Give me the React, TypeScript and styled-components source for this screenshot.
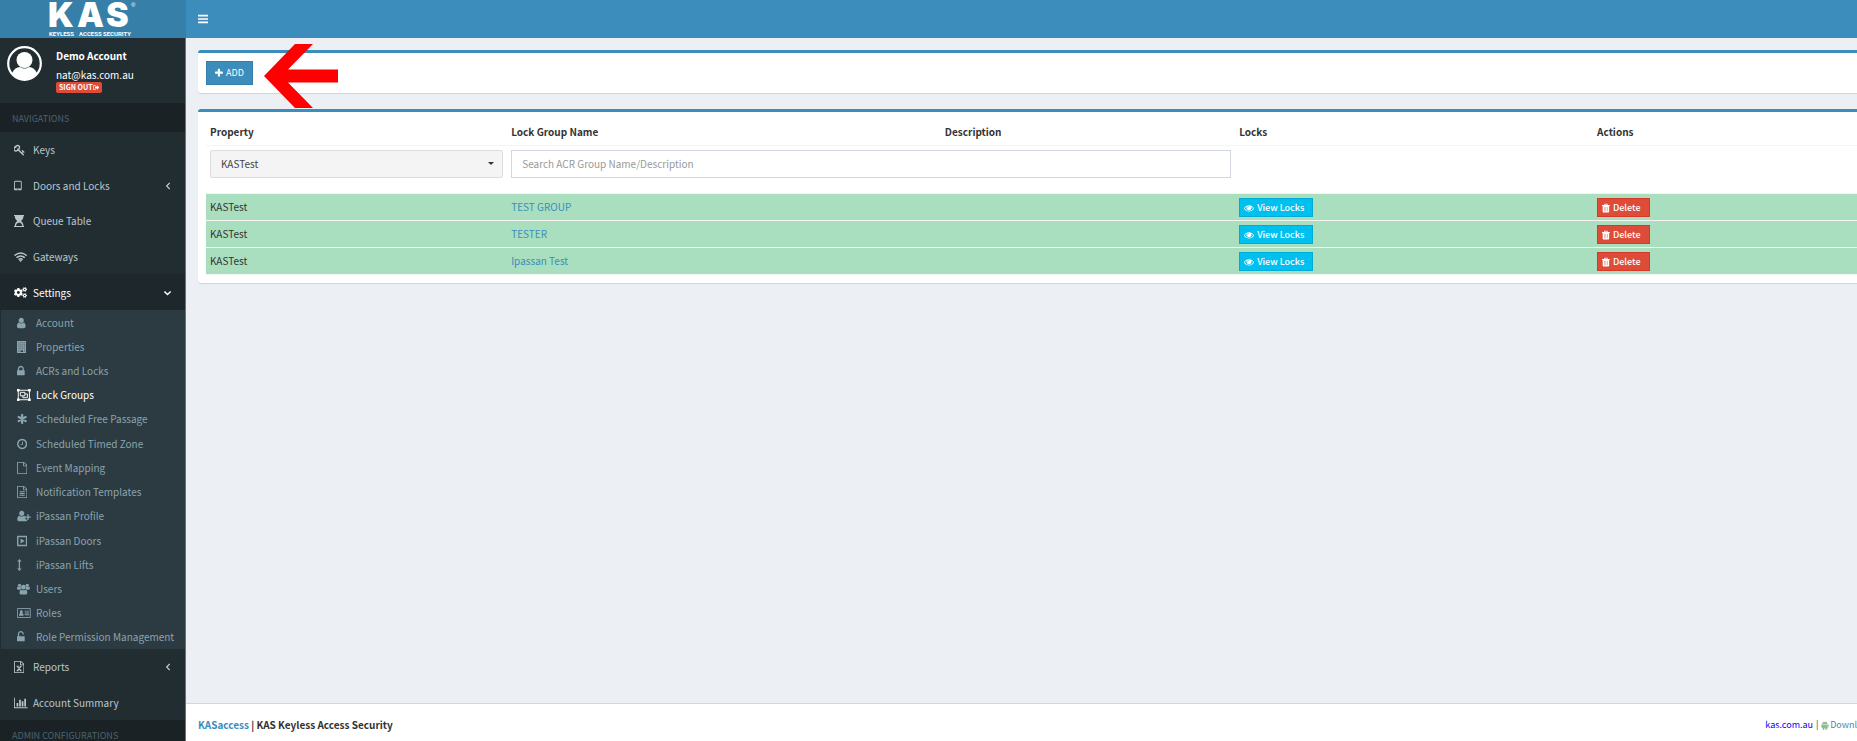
import React from "react";
import styled, { createGlobalStyle, css } from "styled-components";
import { FaCogs } from "react-icons/fa";

const GlobalStyle = createGlobalStyle`
  *, *::before, *::after { box-sizing: border-box; }
  body {
    margin: 0;
    background: #ecf0f5;
    color: #333;
    font: 400 10px/14px "Noto Sans CJK JP", "Open Sans", sans-serif;
  }
  button, input, select { font: inherit; }
  ul { list-style: none; margin: 0; padding: 0; }
  a { color: #3c8dbc; text-decoration: none; }
`;

/* ---------- icons ---------- */

const FILE =
  "M1596 380q28 28 48 76t20 88v1152q0 40-28 68t-68 28h-1344q-40 0-68-28t-28-68v-1600q0-40 28-68t68-28h896q40 0 88 20t76 48zm-444-244v376h376q-10-29-22-41l-313-313q-12-12-41-22zm384 1528v-1024h-416q-40 0-68-28t-28-68v-416h-768v1536h1280z";

/* Each entry: left edge and width of the viewBox on a 1792-high grid, then the drawing. */
const glyphs: Record<string, [number, number, React.ReactNode]> = {
  bars: [128, 1536, <path d="M1664 1344v128q0 26-19 45t-45 19h-1408q-26 0-45-19t-19-45v-128q0-26 19-45t45-19h1408q26 0 45 19t19 45zm0-512v128q0 26-19 45t-45 19h-1408q-26 0-45-19t-19-45v-128q0-26 19-45t45-19h1408q26 0 45 19t19 45zm0-512v128q0 26-19 45t-45 19h-1408q-26 0-45-19t-19-45v-128q0-26 19-45t45-19h1408q26 0 45 19t19 45z" />],
  key: [100, 1664, <path d="M832 512q0-80-56-136t-136-56-136 56-56 136q0 42 19 83-41-19-83-19-80 0-136 56t-56 136 56 136 136 56 136-56 56-136q0-42-19-83 41 19 83 19 80 0 136-56t56-136zm851 704q0 17-49 66t-66 49q-9 0-28.5-16t-36.5-33-38.5-40-24.5-26l-96 96 220 220q28 28 28 68 0 42-39 81t-81 39q-40 0-68-28l-671-671q-176 131-365 131-163 0-265.5-102.5t-102.5-265.5q0-160 95-313t248-248 313-95q163 0 265.5 102.5t102.5 265.5q0 189-131 365l355 355 96-96q-3-3-26-24.5t-40-38.5-33-36.5-16-28.5q0-17 49-66t66-49q13 0 23 10 6 6 46 44.5t82 79.5 86.5 86 73 78 28.5 41z" />],
  tablet: [320, 1152, <path d="M960 1408q0-26-19-45t-45-19-45 19-19 45 19 45 45 19 45-19 19-45zm384-160v-960q0-13-9.500-22.500t-22.500-9.500h-832q-13 0-22.500 9.500t-9.500 22.500v960q0 13 9.500 22.500t22.500 9.500h832q13 0 22.500-9.500t9.500-22.500zm128-960v1088q0 66-47 113t-113 47h-832q-66 0-113-47t-47-113v-1088q0-66 47-113t113-47h832q66 0 113 47t47 113z" />],
  hourglass: [128, 1536, <path fillRule="evenodd" d="M128 0h1536v150h-112c0 350-160 560-380 746 220 186 380 396 380 746h112v150h-1536v-150h112c0-350 160-560 380-746-220-186-380-396-380-746h-112zM440 1642h912c0-150-40-270-130-390l-326-150-326 150c-90 120-130 240-130 390z" />],
  wifi: [0, 1984, <g fill="none" stroke="currentColor" strokeWidth="215"><path d="M80 690q912-780 1824 0M370 990q622-520 1244 0M670 1270q322-260 644 0" /><path fill="currentColor" stroke="none" d="M992 1640l-230-240q230-170 460 0z" /></g>],
  user: [256, 1280, <path d="M1536 1399q0 109-62.5 187t-150.5 78h-854q-88 0-150.5-78t-62.5-187q0-85 8.500-160.500t31.500-152 58.500-131 94-89 134.500-34.500q131 128 313 128t313-128q76 0 134.500 34.500t94 89 58.500 131 31.500 152 8.500 160.500zm-256-887q0 159-112.500 271.500t-271.500 112.500-271.500-112.500-112.500-271.500 112.500-271.500 271.500-112.500 271.500 112.500 112.500 271.500z" />],
  userPlus: [0, 2048, <g><path d="M704 896q-159 0-271-112t-112-272 112-272 271-112 272 112 112 272-112 272-272 112z" /><path d="M1280 1140v290h240v180q-80 54-180 54h-1050q-110 0-180-70t-70-190q0-240 90-400t240-160q140 128 334 128t334-128q100 0 160 100h60q0 196-78 196z" /><path d="M1536 640h200v330h312v200h-312v330h-200v-330h-312v-200h312z" /></g>],
  users: [0, 1920, <g><circle cx="384" cy="350" r="240" /><circle cx="1536" cy="350" r="240" /><path d="M560 640q-20 150 80 290-140 0-220 94h-230q-190 0-190-190 0-310 130-310 110 90 254 90 90 0 176-36zM1360 640q20 150-80 290 140 0 220 94h230q190 0 190-190 0-310-130-310-110 90-254 90-90 0-176-36z" /><circle cx="960" cy="620" r="350" /><path d="M660 1000q130 96 300 96t300-96q276 0 276 480 0 240-230 240h-692q-230 0-230-240 0-480 276-480z" /></g>],
  asterisk: [128, 1536, <path fill="none" stroke="currentColor" strokeWidth="340" strokeLinecap="round" d="M896 300v1192M380 598l1032 596M1412 598l-1032 596" />],
  building: [190, 1408, <path fillRule="evenodd" d="M190 0h1408v1792h-1408zM400 220v130h150v-130zM690 220v130h150v-130zM980 220v130h150v-130zM1270 220v130h130v-130zM400 520v130h150v-130zM690 520v130h150v-130zM980 520v130h150v-130zM1270 520v130h130v-130zM400 820v130h150v-130zM690 820v130h150v-130zM980 820v130h150v-130zM1270 820v130h130v-130zM400 1120v130h150v-130zM690 1120v130h150v-130zM980 1120v130h150v-130zM1270 1120v130h130v-130zM400 1420v130h150v-130zM720 1420v230h380v-230zM1270 1420v130h130v-130z" />],
  lock: [320, 1152, <path d="M640 768h512v-192q0-106-75-181t-181-75-181 75-75 181v192zm832 96v576q0 40-28 68t-68 28h-960q-40 0-68-28t-28-68v-576q0-40 28-68t68-28h32v-192q0-184 132-316t316-132 316 132 132 316v192h32q40 0 68 28t28 68z" />],
  unlock: [320, 1152, <path d="M1376 768q40 0 68 28t28 68v576q0 40-28 68t-68 28h-960q-40 0-68-28t-28-68v-576q0-40 28-68t68-28h32v-320q0-185 131.500-316.500t316.500-131.500 316.500 131.500 131.500 316.500q0 26-19 45t-45 19h-64q-26 0-45-19t-19-45q0-106-75-181t-181-75-181 75-75 181v320h736z" />],
  group: [0, 2048, <g fill="none" stroke="currentColor" strokeWidth="140"><path d="M190 190h1668v1412h-1668z" /><path d="M500 500h680v520h-680zM1180 740h370v560h-680v-280" /><path fill="currentColor" stroke="none" d="M0 0h384v384h-384zM1664 0h384v384h-384zM0 1408h384v384h-384zM1664 1408h384v384h-384z" /></g>],
  clock: [128, 1536, <path d="M1024 544v448q0 14-9 23t-23 9h-320q-14 0-23-9t-9-23v-64q0-14 9-23t23-9h224v-352q0-14 9-23t23-9h64q14 0 23 9t9 23zm416 352q0-148-73-273t-198-198-273-73-273 73-198 198-73 273 73 273 198 198 273 73 273-73 198-198 73-273zm224 0q0 209-103 385.500t-279.500 279.500-385.500 103-385.500-103-279.500-279.500-103-385.500 103-385.500 279.500-279.500 385.500-103 385.500 103 279.500 279.500 103 385.500z" />],
  file: [128, 1536, <path d={FILE} />],
  fileText: [128, 1536, <path d={FILE + "M512 800h768v128h-768zM512 1056h768v128h-768zM512 1312h768v128h-768z"} />],
  fileExcel: [128, 1536, <g><path d={FILE} /><path fill="none" stroke="currentColor" strokeWidth="150" d="M620 800l540 640M1160 800l-540 640M520 800h290M980 800h290M520 1450h290M980 1450h290" /></g>],
  caretSquare: [128, 1536, <g><path fill="none" stroke="currentColor" strokeWidth="210" strokeLinejoin="round" d="M233 233h1326v1326h-1326z" /><path d="M660 520l620 376-620 376z" /></g>],
  arrowsV: [440, 720, <path d="M800 0l330 390h-235v1012h235l-330 390-330-390h235v-1012h-235z" />],
  idCard: [0, 2048, <g><path fill="none" stroke="currentColor" strokeWidth="130" d="M65 225h1918v1342h-1918z" /><path d="M300 1300q0-340 180-400-60-70-60-180 0-220 220-220t220 220q0 110-60 180 180 60 180 400zM1152 560h640v130h-640zM1152 830h640v130h-640zM1152 1100h640v130h-640z" /></g>],
  barChart: [0, 2048, <path d="M0 128h128v1408h1920v128h-2048zM384 900h256v510h-256zM768 400h256v1010h-256zM1152 650h256v760h-256zM1536 250h256v1160h-256z" />],
  plus: [192, 1408, <path d="M1600 736v192q0 40-28 68t-68 28h-416v416q0 40-28 68t-68 28h-192q-40 0-68-28t-28-68v-416h-416q-40 0-68-28t-28-68v-192q0-40 28-68t68-28h416v-416q0-40 28-68t68-28h192q40 0 68 28t28 68v416h416q40 0 68 28t28 68z" />],
  eye: [0, 1792, <path d="M1664 960q-152-236-381-353 61 104 61 225 0 185-131.500 316.500t-316.500 131.500-316.500-131.500-131.500-316.500q0-121 61-225-229 117-381 353 133 205 333.500 326.500t434.500 121.500 434.500-121.500 333.500-326.500zm-720-384q0-20-14-34t-34-14q-125 0-214.500 89.500t-89.500 214.500q0 20 14 34t34 14 34-14 14-34q0-86 61-147t147-61q20 0 34-14t14-34zm848 384q0 34-20 69-140 230-376.500 368.500t-499.500 138.500-499.500-139-376.500-368q-20-35-20-69t20-69q140-229 376.500-368t499.500-139 499.500 139 376.500 368q20 35 20 69z" />],
  trash: [192, 1408, <path fillRule="evenodd" d="M192 350h360l90-222h508l90 222h360v170h-120v1000q0 200-160 200h-848q-160 0-160-200v-1000h-120zM720 350h352l-40-100h-272zM600 700v780h70v-780zM861 700v780h70v-780zM1122 700v780h70v-780z" />],
  signOut: [100, 1700, <path d="M760 256v190h-340q-100 0-100 100v700q0 100 100 100h340v190h-360q-270 0-270-270v-740q0-270 270-270zM1120 350l600 546-600 546v-320h-500v-452h500z" />],
  android: [128, 1536, <path d="M500 60l110 170q130-60 286-60t286 60l110-170 70 40-100 180q190 130 200 340h-1132q10-210 200-340l-100-180zM330 680h1132v740q0 90-90 90h-110v282h-220v-282h-292v282h-220v-282h-110q-90 0-90-90zM128 680h150v560h-150zM1514 680h150v560h-150z" />],
  chevronLeft: [500, 800, <path fill="none" stroke="currentColor" strokeWidth="240" d="M1170 330l-540 566 540 566" />],
  chevronDown: [260, 1280, <path fill="none" stroke="currentColor" strokeWidth="260" d="M340 640l556 540 556-540" />],
};

const Glyph = styled.svg<{ $size: number }>`
  display: block;
  flex: none;
  height: ${(p) => p.$size}px;
  width: auto;
  fill: currentColor;
`;

function Icon({ name, size = 12 }: { name: string; size?: number }) {
  const [left, width, art] = glyphs[name];
  return (
    <Glyph $size={size} viewBox={`${left} 0 ${width} 1792`} aria-hidden="true">
      {art}
    </Glyph>
  );
}

/* ---------- shell ---------- */

const Shell = styled.div`
  display: grid;
  grid-template: 38px 1fr / 186px minmax(0, 1fr);
  height: 100vh;
  overflow: hidden;
`;

const Brand = styled.a`
  display: flex;
  justify-content: center;
  padding-right: 6px;
  background: #367fa9;
  color: #fff;
`;

const TopBar = styled.header`
  display: flex;
  align-items: center;
  padding: 0 12px;
  background: #3c8dbc;
`;

const MenuToggle = styled.button`
  display: flex;
  padding: 0;
  border: 0;
  background: none;
  color: #fff;
`;

const Sidebar = styled.aside`
  overflow: hidden;
  background: #222d32;
  border-right: 1px solid #69747a;
`;

const UserPanel = styled.section`
  display: flex;
  gap: 14px;
  height: 65px;
  padding: 8px 7px;
  color: #fff;
`;

const Avatar = styled.svg`
  flex: none;
  width: 35px;
  height: 35px;
`;

const UserInfo = styled.div`
  display: flex;
  flex-direction: column;
  align-items: flex-start;
`;

const UserName = styled.strong`
  line-height: 20px;
`;

const UserMail = styled.span`
  line-height: 18px;
  height: 16px;
`;

const SignOut = styled.button`
  display: flex;
  align-items: center;
  height: 11px;
  padding: 0 3px;
  border: 0;
  border-radius: 2px;
  background: #dd4b39;
  color: #fff;
  font-size: 7px;
  font-weight: 700;
  line-height: 11px;
`;

const NavHeading = styled.h2`
  height: 29px;
  margin: 0;
  padding: 1px 12px 0;
  background: #1a2226;
  color: #4b646f;
  font-size: 9px;
  font-weight: 400;
  line-height: 30px;
`;

const NavList = styled.ul<{ $height: number }>`
  display: flex;
  flex-direction: column;
  min-height: ${(p) => p.$height}px;
  > li { flex: 1; display: flex; }
`;

const NavLink = styled.a<{ $open?: boolean }>`
  flex: 1;
  display: flex;
  align-items: center;
  padding: 1px 12px 0 14px;
  color: ${(p) => (p.$open ? "#fff" : "#b8c7ce")};
  background: ${(p) => (p.$open ? "#1e282c" : "transparent")};
`;

const NavIcon = styled.span`
  flex: none;
  width: 19px;
`;

const NavText = styled.span`
  flex: 1;
  white-space: nowrap;
`;

const Chevron = styled.span`
  display: flex;
  justify-content: center;
  width: 10px;
`;

const SubList = styled(NavList)`
  margin-left: 1px;
  background: #2c3b41;
`;

const SubLink = styled.a<{ $active?: boolean }>`
  flex: 1;
  display: flex;
  align-items: center;
  padding: 1px 0 0 16px;
  color: ${(p) => (p.$active ? "#fff" : "#8aa4af")};
`;

/* The page runs on past the right edge of the window. */
const Page = styled.div`
  display: flex;
  flex-direction: column;
  min-height: 0;
  margin-right: -90px;
`;

const Content = styled.main`
  flex: 1;
  display: flex;
  flex-direction: column;
  gap: 16px;
  padding: 12px;
`;

const Box = styled.section`
  position: relative;
  padding: 8px;
  background: #fff;
  border-top: 3px solid #3c8dbc;
  border-radius: 3px;
  box-shadow: 0 1px 1px rgba(0, 0, 0, 0.12);
`;

const AddButton = styled.button`
  display: flex;
  align-items: center;
  justify-content: center;
  gap: 3px;
  width: 47px;
  height: 24px;
  padding: 0;
  border: 1px solid #367fa9;
  background: #3c8dbc;
  color: #fff;
  font-size: 9px;
`;

const Pointer = styled.svg`
  position: absolute;
  z-index: 1;
  left: 66px;
  top: -9px;
  width: 74px;
  height: 64px;
  fill: #f00;
  pointer-events: none;
`;

/* ---------- table ---------- */

const Table = styled.table`
  width: 100%;
  table-layout: fixed;
  border-collapse: collapse;
  text-align: left;
`;

const Col = styled.col<{ $share?: string }>`
  width: ${(p) => p.$share ?? "auto"};
`;

const HeadCell = styled.th`
  height: 25px;
  padding: 0 4px;
  border-bottom: 1px solid #f4f4f4;
  font-weight: 700;
`;

const FilterCell = styled.td`
  height: 48px;
  padding: 4px;
  vertical-align: top;
`;

const field = css`
  display: block;
  width: 100%;
  height: 28px;
  padding: 0 10px;
  outline: 0;
`;

const PropertySelect = styled.select`
  ${field}
  appearance: none;
  border: 1px solid #ddd;
  border-radius: 2px;
  color: #444;
  background: #f4f4f4;
`;

const SelectWrap = styled.div`
  position: relative;
  &::after {
    content: "";
    position: absolute;
    right: 9px;
    top: 12px;
    border: 3px solid transparent;
    border-top-color: #333;
    border-bottom: 0;
  }
`;

const SearchInput = styled.input`
  ${field}
  border: 1px solid #d2d6de;
  background: #fff;
  &::placeholder { color: #999; opacity: 1; }
`;

const Row = styled.tr`
  background: #a9dfbf;
`;

const Cell = styled.td`
  height: 27px;
  padding: 0 4px;
  border-top: 1px solid #f4f4f4;
  border-bottom: 1px solid #f4f4f4;
`;

const ButtonCell = styled(Cell)`
  padding-top: 2px;
`;

const SmallButton = styled.button<{ $tone: "info" | "danger" }>`
  display: flex;
  align-items: center;
  gap: 3px;
  height: 19px;
  padding: 0 8px 0 4px;
  border: 1px solid ${(p) => (p.$tone === "info" ? "#00acd6" : "#d73925")};
  background: ${(p) => (p.$tone === "info" ? "#00c0ef" : "#dd4b39")};
  color: #fff;
  font-size: 9px;
  font-weight: 500;
  line-height: 12px;
  white-space: nowrap;
`;

const Footer = styled.footer`
  display: flex;
  align-items: center;
  justify-content: space-between;
  height: 38px;
  padding: 5px 74px 0 12px;
  background: #fff;
  border-top: 1px solid #d2d6de;
`;

const FooterLinks = styled.div`
  display: flex;
  align-items: center;
  gap: 3px;
  font-size: 9px;
`;

const SiteLink = styled.a`
  color: #00f;
`;

const Download = styled.a`
  display: flex;
  align-items: center;
  gap: 1px;
  svg { color: #8fbc8f; }
`;

const topItems = [
  { icon: "key", label: "Keys" },
  { icon: "tablet", label: "Doors and Locks", chevron: "chevronLeft" },
  { icon: "hourglass", label: "Queue Table" },
  { icon: "wifi", label: "Gateways" },
  { icon: "cogs", label: "Settings", chevron: "chevronDown", open: true },
];

const settingsItems = [
  ["user", "Account"],
  ["building", "Properties"],
  ["lock", "ACRs and Locks"],
  ["group", "Lock Groups"],
  ["asterisk", "Scheduled Free Passage"],
  ["clock", "Scheduled Timed Zone"],
  ["file", "Event Mapping"],
  ["fileText", "Notification Templates"],
  ["userPlus", "iPassan Profile"],
  ["caretSquare", "iPassan Doors"],
  ["arrowsV", "iPassan Lifts"],
  ["users", "Users"],
  ["idCard", "Roles"],
  ["unlock", "Role Permission Management"],
];

const bottomItems = [
  { icon: "fileExcel", label: "Reports", chevron: "chevronLeft" },
  { icon: "barChart", label: "Account Summary" },
];

const groups = ["TEST GROUP", "TESTER", "Ipassan Test"];

function MenuIcon({ name }: { name: string }) {
  return name === "cogs" ? <FaCogs size={13} display="block" /> : <Icon name={name} />;
}

type Item = { icon: string; label: string; chevron?: string; open?: boolean };

function NavItem({ icon, label, chevron, open }: Item) {
  return (
    <li>
      <NavLink href="#" $open={open}>
        <NavIcon><MenuIcon name={icon} /></NavIcon>
        <NavText>{label}</NavText>
        {chevron && <Chevron><Icon name={chevron} size={10} /></Chevron>}
      </NavLink>
    </li>
  );
}

export default function App() {
  return (
    <>
      <GlobalStyle />
      <Shell>
        <Brand href="#" aria-label="KAS Keyless Access Security">
          <svg width="92" height="38" viewBox="0 0 92 38" fill="#fff">
            <g fontFamily="Inter, sans-serif" fontWeight="900" fontSize="34">
              <text x="4" y="27">K</text>
              <text x="33" y="27">A</text>
              <text x="62" y="27">S</text>
            </g>
            <text x="87" y="7" fontFamily="Liberation Sans, sans-serif" fontSize="6">®</text>
            <g fontFamily="Roboto, sans-serif" fontWeight="700" fontSize="6">
              <text x="5" y="36">KEYLESS</text>
              <text x="35" y="36">ACCESS</text>
              <text x="59" y="36">SECURITY</text>
            </g>
          </svg>
        </Brand>
        <TopBar>
          <MenuToggle type="button" aria-label="Toggle navigation">
            <Icon name="bars" size={12} />
          </MenuToggle>
        </TopBar>

        <Sidebar>
          <UserPanel>
            <Avatar viewBox="0 0 35 35" aria-hidden="true">
              <circle cx="17.5" cy="17.5" r="16.300" fill="#222d32" stroke="#fff" strokeWidth="2.200" />
              <circle cx="17.5" cy="14" r="8" fill="#fff" />
              <path d="M5 27q3-6 8-6 4.500 3 9 0 5 0 8 6-5 7-12.500 7t-12.500-7z" fill="#fff" />
            </Avatar>
            <UserInfo>
              <UserName>Demo Account</UserName>
              <UserMail>nat@kas.com.au</UserMail>
              <SignOut type="button">SIGN OUT<Icon name="signOut" size={7} /></SignOut>
            </UserInfo>
          </UserPanel>
          <nav>
            <NavHeading>NAVIGATIONS</NavHeading>
            <NavList $height={178}>
              {topItems.map((item) => <NavItem key={item.label} {...item} />)}
            </NavList>
            <SubList $height={339}>
              {settingsItems.map(([icon, label]) => (
                <li key={label}>
                  <SubLink href="#" $active={label === "Lock Groups"}>
                    <NavIcon><MenuIcon name={icon} /></NavIcon>
                    <NavText>{label}</NavText>
                  </SubLink>
                </li>
              ))}
            </SubList>
            <NavList $height={71}>
              {bottomItems.map((item) => <NavItem key={item.label} {...item} />)}
            </NavList>
            <NavHeading>ADMIN CONFIGURATIONS</NavHeading>
          </nav>
        </Sidebar>

        <Page>
          <Content>
            <Box>
              <AddButton type="button"><Icon name="plus" size={10} />ADD</AddButton>
              <Pointer viewBox="0 0 74 64" aria-hidden="true">
                <path d="M0 32L31 0H49L24 25.500H74V38.500H24L49 64H31z" />
              </Pointer>
            </Box>
            <Box>
              <Table>
                <colgroup>
                  <Col $share="17.5%" />
                  <Col $share="25.2%" />
                  <Col $share="17.1%" />
                  <Col $share="20.8%" />
                  <Col />
                </colgroup>
                <thead>
                  <tr>
                    <HeadCell>Property</HeadCell>
                    <HeadCell>Lock Group Name</HeadCell>
                    <HeadCell>Description</HeadCell>
                    <HeadCell>Locks</HeadCell>
                    <HeadCell>Actions</HeadCell>
                  </tr>
                </thead>
                <tbody>
                  <tr>
                    <FilterCell>
                      <SelectWrap>
                        <PropertySelect aria-label="Property"><option>KASTest</option></PropertySelect>
                      </SelectWrap>
                    </FilterCell>
                    <FilterCell colSpan={2}>
                      <SearchInput type="text" aria-label="Search groups" placeholder="Search ACR Group Name/Description" />
                    </FilterCell>
                    <FilterCell colSpan={2} />
                  </tr>
                  {groups.map((name) => (
                    <Row key={name}>
                      <Cell>KASTest</Cell>
                      <Cell><a href="#">{name}</a></Cell>
                      <Cell />
                      <ButtonCell><SmallButton type="button" $tone="info"><Icon name="eye" size={10} />View Locks</SmallButton></ButtonCell>
                      <ButtonCell><SmallButton type="button" $tone="danger"><Icon name="trash" size={10} />Delete</SmallButton></ButtonCell>
                    </Row>
                  ))}
                </tbody>
              </Table>
            </Box>
          </Content>
          <Footer>
            <strong><a href="#">KASaccess</a> | KAS Keyless Access Security</strong>
            <FooterLinks>
              <SiteLink href="#">kas.com.au</SiteLink>|
              <Download href="#"><Icon name="android" size={9} />Download</Download>
            </FooterLinks>
          </Footer>
        </Page>
      </Shell>
    </>
  );
}
